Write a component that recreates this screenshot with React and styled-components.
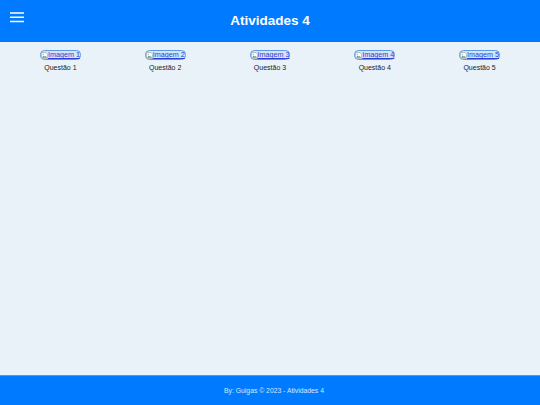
import React from "react";
import styled, { createGlobalStyle } from "styled-components";

const Global = createGlobalStyle`
  html, body { margin: 0; padding: 0; height: 100%; }
  body { font-family: "Liberation Sans", Arial, sans-serif; background: #e9f1f9; }
  #root { height: 100%; }
`;
const Page = styled.div`
  display: flex; flex-direction: column; height: 405px; width: 540px; overflow: hidden;
`;
const Header = styled.header`
  height: 42px; background: #007bff; display: grid; grid-template-columns: 1fr auto 1fr; align-items: center; color: #fff;
`;
const MenuButton = styled.div`
  display: flex; padding: 0 0 8px 10px; height: 12px; align-items: center;
`;
const Title = styled.h1`
  margin: 0 0 2px; font-size: 13.5px; font-weight: 700; color: #fff;
`;
const Main = styled.main`
  flex: 1; padding: 8px 8px 0; display: grid; grid-template-columns: repeat(5, 1fr); align-content: start;
`;
const Item = styled.div`
  display: flex; flex-direction: column; align-items: center;
`;
const ImageLink = styled.a`
  display: flex; align-items: center; height: 8px; padding: 0; border: 1.5px solid #5b9be6; border-radius: 4.5px;
  background: #d6e4f7; color: #2a3fd6; font-size: 7.2px; line-height: 8px; text-decoration: underline; cursor: pointer; white-space: nowrap;
`;
const Caption = styled.div`
  margin-top: 3px; font-size: 7px; line-height: 9px; color: #1c1c1c;
`;
const Footer = styled.footer`
  height: 30px; background: #007bff; border-top: 1px solid #3f9bff; box-sizing: border-box; display: flex; justify-content: center; align-items: center; color: #d6e8ff; font-size: 6.8px; padding-left: 8px;
`;
const FooterText = styled.span``;

const Broken = () => (
  <svg width="7" height="7" viewBox="0 0 16 16" style={{ flex: "none" }}>
    <path d="M1 1h10l4 4v10H1z" fill="#fff" stroke="#9aa0a6" strokeWidth="1.5" />
    <path d="M2 13l4-5 3 3 2-2 3 4z" fill="#5aa469" />
    <circle cx="5" cy="5" r="1.6" fill="#7fb2ee" />
  </svg>
);

const items = [1, 2, 3, 4, 5];

export default function App() {
  return (
    <Page>
      <Global />
      <Header>
        <MenuButton>
          <svg width="14" height="11" viewBox="0 0 14 11">
            <path d="M0 1h14M0 5.3h14M0 9.6h14" stroke="#fff" strokeWidth="1.5" />
          </svg>
        </MenuButton>
        <Title>Atividades 4</Title>
        <span />
      </Header>
      <Main>
        {items.map((n) => (
          <Item key={n}>
            <ImageLink><Broken />Imagem {n}</ImageLink>
            <Caption>Questão {n}</Caption>
          </Item>
        ))}
      </Main>
      <Footer><FooterText>By: Guigas © 2023 - Atividades 4</FooterText></Footer>
    </Page>
  );
}
